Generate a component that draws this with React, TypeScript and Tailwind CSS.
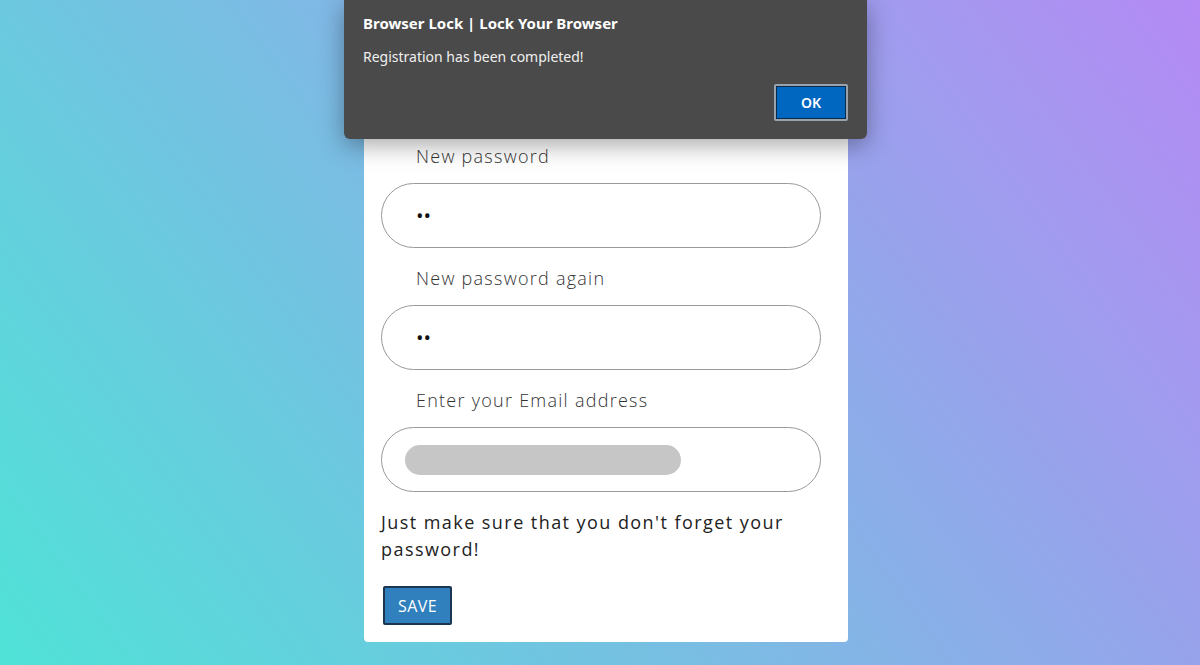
const fields = [
  { label: "New password", value: "••" },
  { label: "New password again", value: "••" },
];

export default function App() {
  return (
    <div className="relative h-screen w-full overflow-hidden bg-linear-[54deg] from-[#4fe2d7] to-[#b48af4] font-['Open_Sans',sans-serif]">
      <div className="flex h-full flex-col items-center justify-end pb-[23px]">
        <div className="ml-[12px] w-[484px] rounded-[4px] bg-white px-[17px] pb-[17px] pt-[40px]">
          <div className="flex flex-col">
            {fields.map((f) => (
              <div key={f.label} className="flex flex-col">
                <label className="pl-[35px] pt-[2px] text-[18px] leading-[34px] font-light tracking-[0.07em] text-[#333]">
                  {f.label}
                </label>
                <div className="mb-[11px] mt-[10px] flex h-[65px] w-[440px] items-center rounded-full border border-[#999] pl-[34px] text-[20px] text-[#111]">
                  {f.value}
                </div>
              </div>
            ))}
            <div className="flex flex-col">
              <label className="pl-[35px] pt-[2px] text-[18px] leading-[34px] font-light tracking-[0.07em] text-[#333]">
                Enter your Email address
              </label>
              <div className="mt-[10px] flex h-[65px] w-[440px] items-center rounded-full border border-[#999] pl-[23px]">
                <div className="h-[30px] w-[276px] rounded-full bg-[#c6c6c6]" />
              </div>
            </div>
            <p className="mt-[17px] w-[440px] text-[18px] leading-[27px] tracking-[0.08em] text-[#222]">
              Just make sure that you don't forget your password!
            </p>
            <div className="mt-[23px] pl-[2px]">
              <button className="h-[39px] w-[69px] rounded-[2px] border-2 border-[#1c3550] bg-[#2f80bd] text-[16px] font-medium uppercase tracking-[0.03em] text-white">
                Save
              </button>
            </div>
          </div>
        </div>
      </div>

      {/* alert dialog */}
      <div className="absolute left-[344px] top-0 h-[139px] w-[523px] rounded-b-[6px] bg-[#4a4a4a] px-[19px] pt-[13px] font-['Noto_Sans',sans-serif] text-white shadow-[0_6px_24px_rgba(0,0,0,0.35)]">
        <div className="text-[15px] leading-[20px] font-bold">Browser Lock | Lock Your Browser</div>
        <div className="mt-[14px] text-[14px] leading-[20px] text-[#f0f0f0]">
          Registration has been completed!
        </div>
        <div className="mt-[17px] flex justify-end">
          <button className="h-[37px] w-[74px] rounded-[2px] border-2 border-[#9aa3ad] bg-[#0067c0] text-[14px] font-semibold text-white shadow-[inset_0_0_0_1px_#0b2a4a]">
            OK
          </button>
        </div>
      </div>
    </div>
  );
}
